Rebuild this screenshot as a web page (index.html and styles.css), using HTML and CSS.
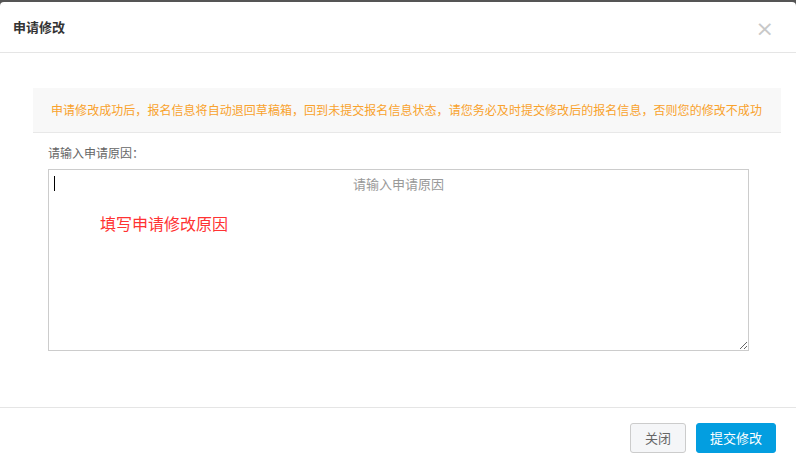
FILE: index.html
```html
<!DOCTYPE html>
<html lang="zh-CN">
<head>
<meta charset="utf-8">
<title>申请修改</title>
<link rel="stylesheet" href="styles.css">
</head>
<body>
<div class="modal">
  <div class="modal-header">
    <h3 class="modal-title">申请修改</h3>
    <span class="modal-close">×</span>
  </div>
  <div class="modal-body">
    <div class="alert">申请修改成功后，报名信息将自动退回草稿箱，回到未提交报名信息状态，请您务必及时提交修改后的报名信息，否则您的修改不成功</div>
    <div class="label">请输入申请原因：</div>
    <div class="field">
      <textarea class="reason" placeholder="请输入申请原因"></textarea>
      <span class="caret"></span>
      <span class="note">填写申请修改原因</span>
    </div>
  </div>
  <div class="modal-footer">
    <button class="btn btn-default">关闭</button>
    <button class="btn btn-primary">提交修改</button>
  </div>
</div>
</body>
</html>
```

FILE: styles.css
```css
* { box-sizing: border-box; }
html, body { margin: 0; padding: 0; }
body {
  background: #555;
  font-family: "Noto Sans CJK SC", "Noto Sans", sans-serif;
  width: 796px;
  height: 455px;
  overflow: hidden;
}
.modal {
  margin-top: 2px;
  background: #fff;
  border-radius: 4px 4px 0 0;
  height: 453px;
  display: flex;
  flex-direction: column;
}
.modal-header {
  height: 51px;
  border-bottom: 1px solid #e5e5e5;
  display: flex;
  align-items: center;
  justify-content: space-between;
  padding: 0 22px 0 13px;
}
.modal-title {
  margin: 0;
  font-size: 13px;
  font-weight: bold;
  color: #333;
  line-height: 18px;
  padding-bottom: 1px;
}
.modal-close {
  font-size: 22px;
  line-height: 20px;
  color: #c8c8c8;
  font-family: "DejaVu Sans", sans-serif;
  margin-top: 4px;
}
.modal-body {
  padding: 35px 15px 0 33px;
  height: 355px;
  border-bottom: 1px solid #e5e5e5;
}
.alert {
  width: 748px;
  height: 45px;
  background: #f8f8f8;
  border-bottom: 1px solid #e8e8e8;
  color: #f9a22c;
  font-size: 12px;
  line-height: 44px;
  padding-left: 18px;
  letter-spacing: 0.05px;
  white-space: nowrap;
}
.label {
  margin: 12px 0 0 15px;
  font-size: 12px;
  color: #666;
  line-height: 16px;
}
.field {
  position: relative;
  margin: 8px 0 0 15px;
  width: 701px;
  height: 182px;
}
.reason {
  display: block;
  width: 701px;
  height: 182px;
  border: 1px solid #ccc;
  resize: vertical;
  font-family: "Noto Sans CJK SC", "Noto Sans", sans-serif;
  font-size: 13px;
  text-align: center;
  padding: 5px 6px;
  line-height: 18px;
  outline: none;
  margin: 0;
}
.reason::placeholder { color: #999; }
.caret {
  position: absolute;
  left: 6px;
  top: 7px;
  width: 1px;
  height: 15px;
  background: #000;
}
.note {
  position: absolute;
  left: 52px;
  top: 43px;
  color: #f33;
  font-size: 16px;
  line-height: 22px;
}
.modal-footer {
  display: flex;
  justify-content: flex-end;
  align-items: flex-start;
  gap: 10px;
  padding: 15px 20px 0 0;
}
.btn {
  height: 30px;
  border-radius: 3px;
  font-family: "Noto Sans CJK SC", "Noto Sans", sans-serif;
  font-size: 13px;
  line-height: 28px;
  padding: 0;
  cursor: pointer;
}
.btn-default {
  width: 56px;
  background: #f5f6f8;
  border: 1px solid #ccc;
  color: #666;
}
.btn-primary {
  width: 80px;
  background: #039ee0;
  border: 1px solid #039ee0;
  color: #fff;
}
```
